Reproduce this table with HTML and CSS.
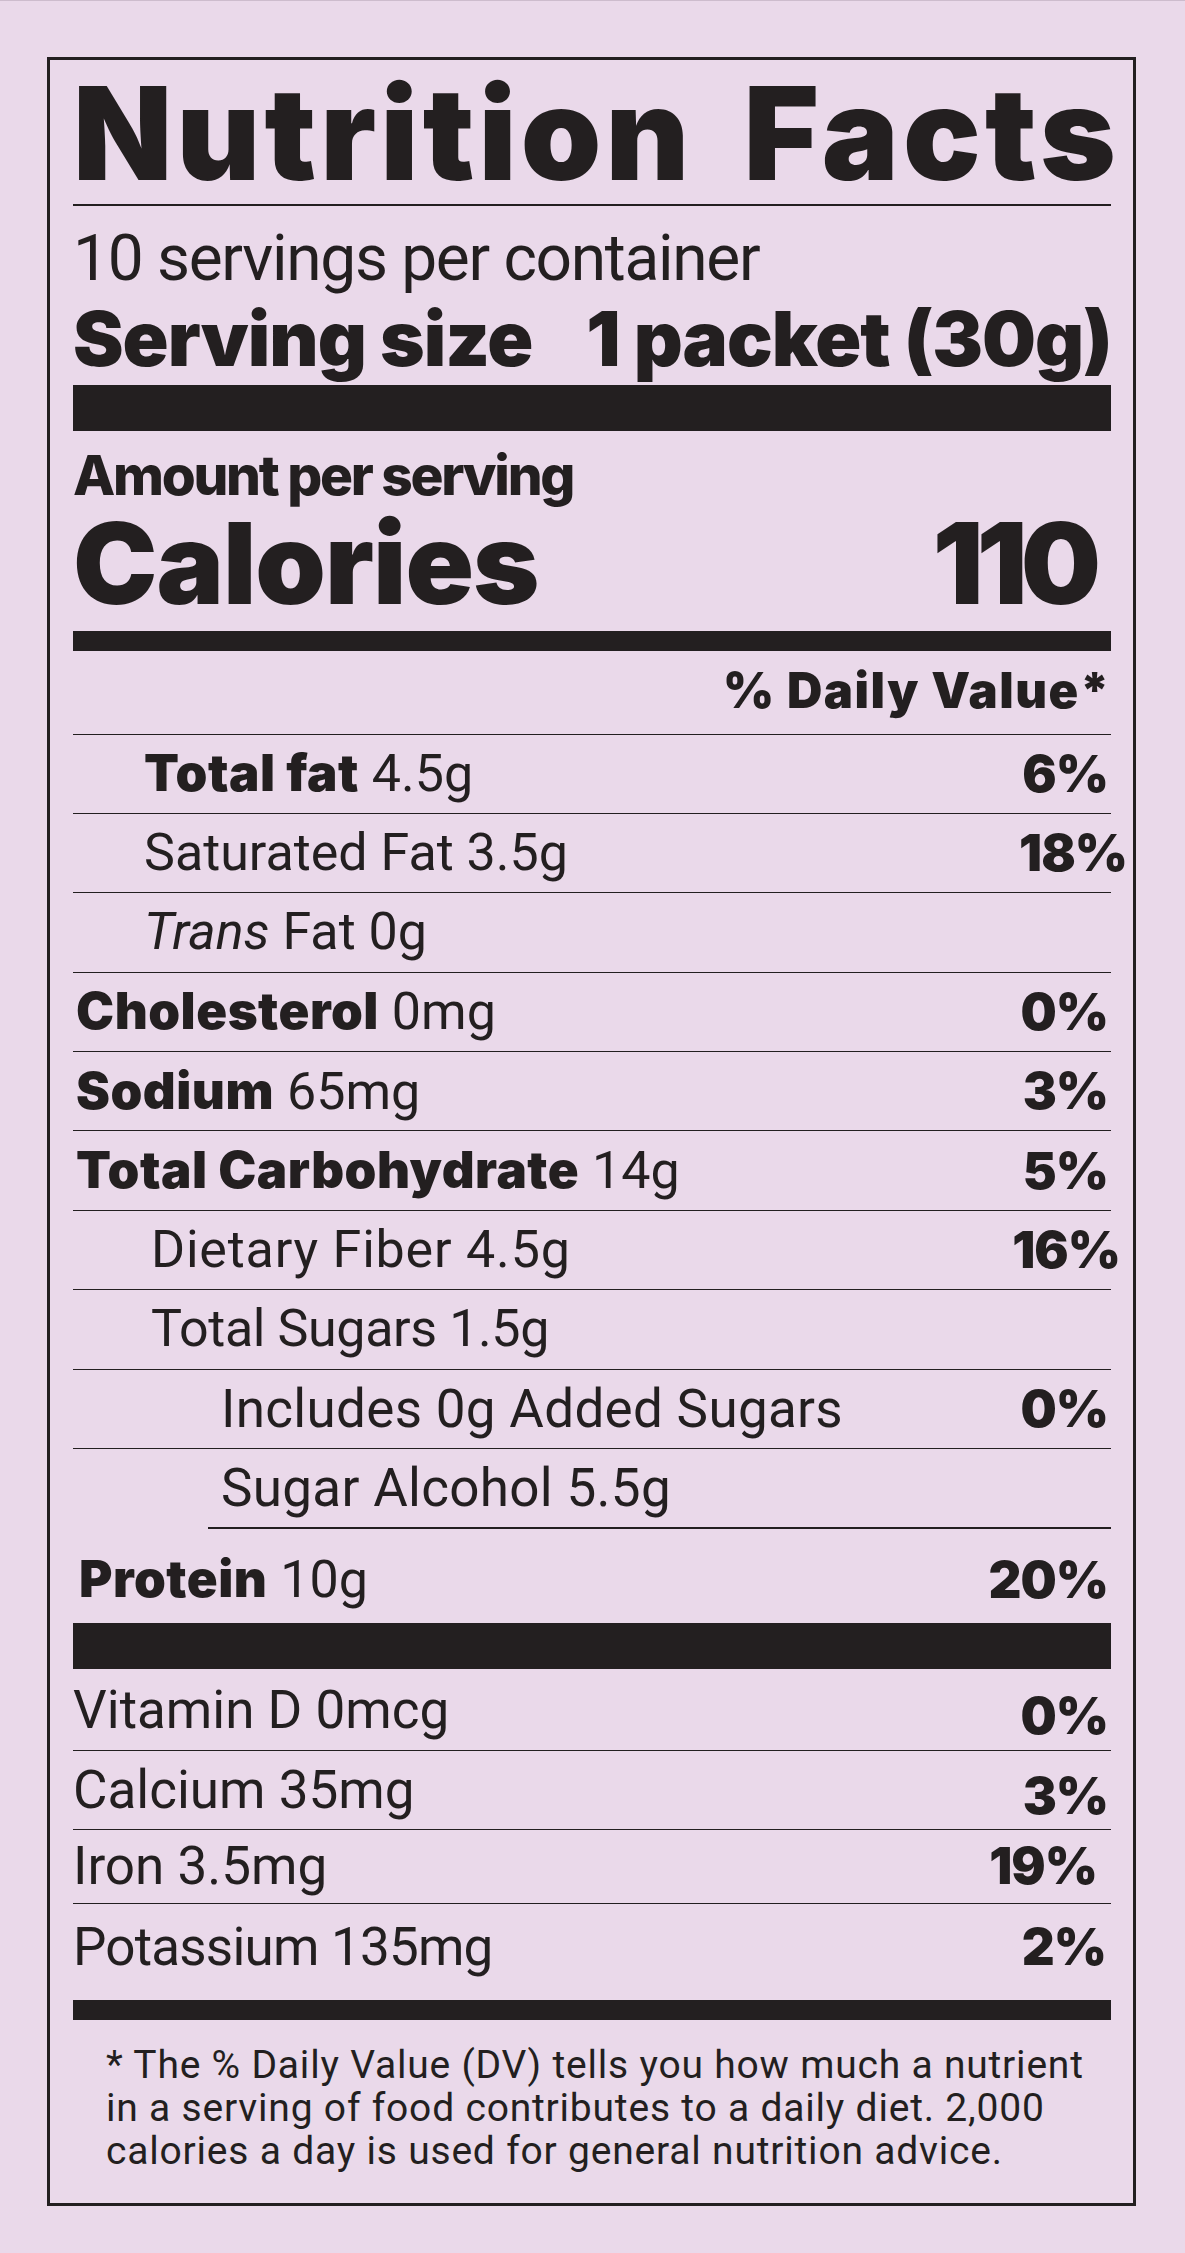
FILE: index.html
```html
<!DOCTYPE html>
<html lang="en">
<head>
<meta charset="utf-8">
<title>Nutrition Facts</title>
<link rel="stylesheet" href="styles.css">
</head>
<body>
<section class="label">
  <h1 class="title">Nutrition Facts</h1>
  <div class="rule-thin"></div>
  <p class="servings">10 servings per container</p>
  <div class="serving-size"><span>Serving size</span><span>1 packet (30g)</span></div>
  <div class="bar bar-lg bar-top"></div>
  <p class="amount">Amount per serving</p>
  <div class="calories"><span>Calories</span><span class="cal-num">110</span></div>
  <div class="bar bar-md"></div>
  <div class="dv-head">% Daily Value*</div>

  <div class="row"><span class="name ind1"><b>Total fat</b> 4.5g</span><span class="pct">6%</span></div>
  <div class="row"><span class="name ind1">Saturated Fat 3.5g</span><span class="pct out-19">18%</span></div>
  <div class="row"><span class="name ind1"><i>Trans</i> Fat 0g</span></div>
  <div class="row"><span class="name ind0"><b>Cholesterol</b> 0mg</span><span class="pct">0%</span></div>
  <div class="row"><span class="name ind0"><b>Sodium</b> 65mg</span><span class="pct">3%</span></div>
  <div class="row"><span class="name ind0"><b>Total Carbohydrate</b> 14g</span><span class="pct">5%</span></div>
  <div class="row"><span class="name ind2 wide">Dietary Fiber 4.5g</span><span class="pct out-12">16%</span></div>
  <div class="row"><span class="name ind2 tight">Total Sugars 1.5g</span></div>
  <div class="row"><span class="name ind3">Includes 0g Added Sugars</span><span class="pct">0%</span></div>
  <div class="row"><span class="name ind3">Sugar Alcohol 5.5g</span></div>
  <div class="rule-indent"></div>
  <div class="row row-protein"><span class="name indp"><b>Protein</b> 10g</span><span class="pct">20%</span></div>

  <div class="bar bar-lg"></div>

  <div class="vrow vrow-d"><span class="name">Vitamin D 0mcg</span><span class="pct drop">0%</span></div>
  <div class="vrow vrow-ca"><span class="name">Calcium 35mg</span><span class="pct drop">3%</span></div>
  <div class="vrow vrow-fe"><span class="name">Iron 3.5mg</span><span class="pct in-11">19%</span></div>
  <div class="vrow vrow-k"><span class="name tight-k">Potassium 135mg</span><span class="pct in-2">2%</span></div>

  <div class="bar bar-md"></div>

  <p class="footnote">* The % Daily Value (DV) tells you how much a nutrient<br>in a serving of food contributes to a daily diet. 2,000<br>calories a day is used for general nutrition advice.</p>
</section>
</body>
</html>
```

FILE: styles.css
```css
:root {
  --ink: #231f20;
  --bg: #ead9ea;
  --reg: "Roboto", "Liberation Sans", sans-serif;
  --bold: "Inter", "Roboto", "Liberation Sans", sans-serif;
}

* { box-sizing: border-box; }

html {
  background: var(--bg);
}

body {
  margin: 0;
  min-height: 2253px;
  background: var(--bg);
  color: var(--ink);
  font-family: var(--reg);
  border-top: 1px solid #cdbccd;
}

.label {
  margin: 56px 0 0 47px;
  width: 1089px;
  border: 3px solid var(--ink);
  padding: 0 22px 0 23px;
}

.title {
  margin: 0;
  padding-top: 13px;
  font-family: var(--bold);
  font-weight: 900;
  font-size: 129px;
  line-height: 120px;
  letter-spacing: 4.2px;
  word-spacing: 20px;
  white-space: nowrap;
}

.rule-thin {
  margin-top: 11px;
  height: 1.5px;
  background: var(--ink);
}

.servings {
  margin: 21px 0 0;
  font-size: 64px;
  line-height: 64px;
  letter-spacing: -1.3px;
}

.serving-size {
  display: flex;
  gap: 54px;
  margin-top: 9px;
  font-family: var(--bold);
  font-weight: 900;
  font-size: 76px;
  line-height: 76px;
  letter-spacing: -1px;
  white-space: nowrap;
}

.bar { background: var(--ink); }
.bar-lg { height: 46px; }
.bar-top { margin-top: 9px; }
.bar-md { height: 20px; }

.amount {
  margin: 17px 0 0;
  font-family: var(--bold);
  font-weight: 800;
  font-size: 55px;
  line-height: 55px;
  letter-spacing: -2.3px;
}

.calories {
  display: flex;
  justify-content: space-between;
  margin-top: 4px;
  padding-right: 17px;
  margin-bottom: 11px;
  font-family: var(--bold);
  font-weight: 900;
  font-size: 113px;
  line-height: 113px;
  letter-spacing: -1px;
}

.cal-num { letter-spacing: -7px; }

.dv-head {
  height: 83px;
  padding: 15px 0 0 0;
  text-align: right;
  font-family: var(--bold);
  font-weight: 900;
  font-size: 49px;
  line-height: 49px;
  letter-spacing: 1.5px;
}

.row {
  display: flex;
  align-items: center;
  justify-content: space-between;
  height: 79.4px;
  border-top: 1.5px solid var(--ink);
  padding-right: 3px;
  font-size: 52px;
  line-height: 60px;
}

.name {
  white-space: nowrap;
  letter-spacing: 0;
}

.name b {
  font-family: var(--bold);
  font-weight: 900;
  font-size: 51px;
  letter-spacing: 0.5px;
}

.name i { font-style: italic; }

.pct {
  font-family: var(--bold);
  font-weight: 900;
  font-size: 51px;
  letter-spacing: -1px;
  white-space: nowrap;
}

.ind0 { padding-left: 3px; }
.ind1 { padding-left: 71px; }
.ind2 { padding-left: 78px; }
.ind3 { padding-left: 148px; font-size: 53px; letter-spacing: 0.3px; }
.indp { padding-left: 6px; }
.wide { letter-spacing: 0.8px; }
.tight { letter-spacing: -0.4px; }
.tight-k { letter-spacing: -0.8px; }

.out-19 { margin-right: -19px; }
.out-12 { margin-right: -12px; }
.in-11 { margin-right: 11px; }
.in-2 { margin-right: 2px; }
.drop { margin-top: 12px; }

.rule-indent {
  height: 1.5px;
  margin-left: 135px;
  background: var(--ink);
}

.row-protein {
  height: 94.5px;
  border-top: 0;
  padding-top: 7px;
}

.vrow {
  display: flex;
  align-items: center;
  justify-content: space-between;
  border-bottom: 1.5px solid var(--ink);
  padding-right: 3px;
  font-size: 53px;
  line-height: 60px;
}

.vrow-d { height: 81.5px; }
.vrow-ca { height: 79px; }
.vrow-fe { height: 74px; }
.vrow-k { height: 96.5px; border-bottom: 0; padding-bottom: 10px; }

.footnote {
  margin: 0;
  padding: 24px 0 30px 33px;
  font-size: 39px;
  line-height: 43px;
  letter-spacing: 0.8px;
  white-space: nowrap;
}
```
